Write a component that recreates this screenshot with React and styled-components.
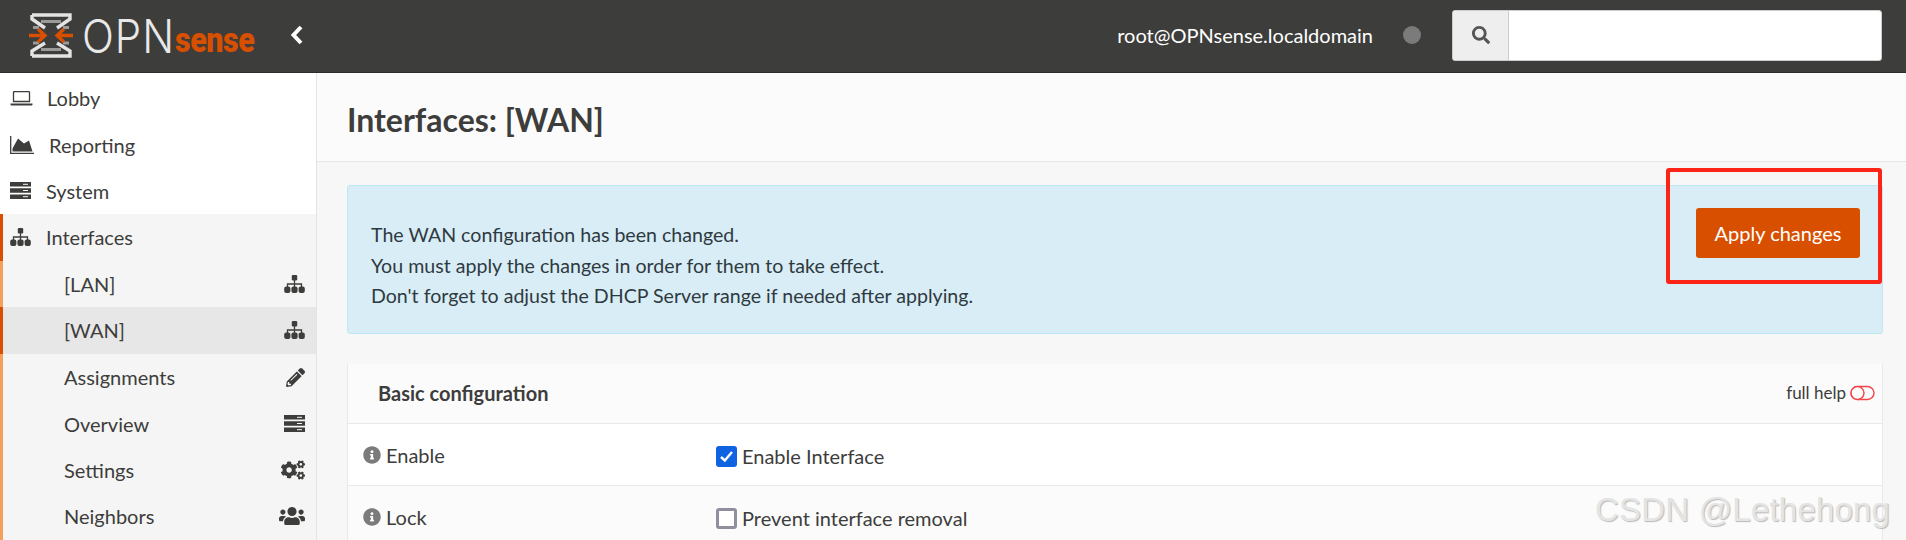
import React from 'react';
import styled, { createGlobalStyle } from 'styled-components';
import { FaPencilAlt, FaCogs, FaUsers, FaInfoCircle, FaSearch } from 'react-icons/fa';

const GlobalStyle = createGlobalStyle`
  html, body { margin: 0; padding: 0; height: 540px; overflow: hidden; background: #f7f7f7; }
  * { box-sizing: border-box; }
  body { font-family: "Lato", "Open Sans", sans-serif; color: #3d3d3b; }
`;

const LaptopIcon = () => (
  <svg width="23" height="15" viewBox="0 0 23 15">
    <path d="M3.5 1.5 a1 1 0 0 1 1-1 h14 a1 1 0 0 1 1 1 V10.5 H3.5 Z" fill="none" stroke="#3d3d3b" strokeWidth="1.3" />
    <path d="M0.5 12.5 H22.5 V13.5 a1 1 0 0 1-1 1 H1.5 a1 1 0 0 1-1-1 Z" fill="#3d3d3b" />
  </svg>
);

const AreaIcon = () => (
  <svg width="24" height="18" viewBox="0 0 24 18">
    <path d="M0.7 0 V17.3 H24" fill="none" stroke="#3d3d3b" strokeWidth="1.3" />
    <path d="M2.5 15.5 V12.5 L8 2.5 L14 7.5 L19 4.5 L22.5 15.5 Z" fill="#3d3d3b" />
  </svg>
);

const ServerIcon = () => (
  <svg width="21" height="17" viewBox="0 0 21 17">
    <path d="M0 0 H21 V4.6 H0 Z M0 6.2 H21 V10.8 H0 Z M0 12.4 H21 V17 H0 Z" fill="#3d3d3b" />
    <path d="M13 2.3 H18 M13 8.5 H18 M13 14.7 H18" stroke="#f5f5f5" strokeWidth="1" />
  </svg>
);

const SitemapIcon = () => (
  <svg width="21" height="18" viewBox="0 0 21 18">
    <rect x="7.8" y="0" width="5.4" height="5.4" rx="1.2" fill="#3d3d3b" />
    <path d="M10.5 5 V12 M3.5 12 V9 H17.5 V12" fill="none" stroke="#3d3d3b" strokeWidth="1.3" />
    <rect x="0.2" y="11.6" width="6.2" height="6.4" rx="2" fill="#3d3d3b" />
    <rect x="7.4" y="11.6" width="6.2" height="6.4" rx="2" fill="#3d3d3b" />
    <rect x="14.6" y="11.6" width="6.2" height="6.4" rx="2" fill="#3d3d3b" />
  </svg>
);

const LogoMark = () => (
  <svg width="44" height="45" viewBox="0 0 44 45">
    <path d="M3 2 H41 V6 L28 15 M3 2 V6 L16 15" fill="none" stroke="#e4e4e4" strokeWidth="3.4" />
    <path d="M3 43 H41 V38 L28 30 M3 43 V38 L16 30" fill="none" stroke="#e4e4e4" strokeWidth="3.4" />
    <path d="M12 8.5 H32 M12 36.5 H32" stroke="#9a9a9a" strokeWidth="3" />
    <path d="M4 14.5 H10 M34 14.5 H40 M4 30 H10 M34 30 H40" stroke="#9a9a9a" strokeWidth="3" />
    <path d="M0 22.5 H15 M9 16 L16 22.5 L9 29" fill="none" stroke="#d94f00" strokeWidth="3.4" />
    <path d="M44 22.5 H29 M35 16 L28 22.5 L35 29" fill="none" stroke="#d94f00" strokeWidth="3.4" />
  </svg>
);

const ToggleIcon = () => (
  <svg width="25" height="16" viewBox="0 0 25 16">
    <rect x="1" y="1.5" width="23" height="13" rx="6.5" fill="none" stroke="#f0454a" strokeWidth="1.4" />
    <circle cx="7.5" cy="8" r="6.5" fill="#fff" stroke="#f0454a" strokeWidth="1.4" />
  </svg>
);

const Page = styled.div`
  height: 540px;
  display: flex;
  flex-direction: column;
  position: relative;
  overflow: hidden;
`;

const TopBar = styled.header`
  height: 73px;
  flex: none;
  background: #3d3d3b;
  border-bottom: 1px solid #2c2c2a;
  display: flex;
  align-items: center;
  padding: 0 24px 2px 29px;
`;

const Logo = styled.div`
  display: flex;
  align-items: center;
  height: 45px;
`;

const LogoOpn = styled.span`
  font-family: "Inter", sans-serif;
  font-weight: 300;
  font-size: 42px;
  line-height: 45px;
  color: #e8e8e8;
  margin-left: 9px;
  letter-spacing: 1px;
  transform: scaleY(1.12);
`;

const LogoSense = styled.span`
  font-family: "Roboto", sans-serif;
  font-weight: 900;
  font-size: 35px;
  line-height: 30px;
  color: #d94f00;
  margin: 12px -8px 0 0;
  letter-spacing: -0.5px;
  transform: scaleX(0.87);
  transform-origin: left center;
`;

const Collapse = styled.svg`
  margin-left: 32px;
  flex: none;
`;

const TopRight = styled.div`
  margin-left: auto;
  display: flex;
  align-items: center;
`;

const UserName = styled.span`
  color: #fff;
  font-size: 20px;
`;

const Dot = styled.span`
  width: 18px;
  height: 18px;
  border-radius: 50%;
  background: #7b7b7b;
  margin: 0 31px 0 30px;
`;

const SearchBox = styled.div`
  width: 430px;
  height: 51px;
  display: flex;
  border-radius: 3px;
  overflow: hidden;
  background: #fff;
  border: 1px solid #ccc;
`;

const SearchAddon = styled.div`
  width: 56px;
  background: #eee;
  border-right: 1px solid #ccc;
  display: flex;
  align-items: center;
  justify-content: center;
  color: #555;
  font-size: 18px;
`;

const Body = styled.div`
  flex: 1;
  display: flex;
  min-height: 0;
`;

const Sidebar = styled.nav`
  width: 317px;
  flex: none;
  background: #fff;
  border-right: 1px solid #e4e4e4;
  padding-top: 2px;
`;

const NavRow = styled.div`
  height: ${p => p.$h || 46.4}px;
  display: flex;
  align-items: center;
  padding: 0 11px 0 ${p => (p.$sub ? 61 : 7)}px;
  font-size: 20px;
  color: #3d3d3b;
  background: ${p => (p.$active ? '#e7e7e7' : p.$open ? '#f5f5f5' : '#fff')};
  border-left: 3px solid ${p => (p.$bar === 'dark' ? '#d94f00' : p.$bar === 'light' ? '#f4a05a' : 'transparent')};
`;

const NavIcon = styled.span`
  width: ${p => p.$w}px;
  flex: none;
  display: flex;
  align-items: center;
`;

const SubIcon = styled.span`
  margin-left: auto;
  display: flex;
  align-items: center;
  font-size: ${p => p.$size || 21}px;
`;

const Main = styled.main`
  flex: 1;
  min-width: 0;
  background: #f7f7f7;
`;

const TitleBar = styled.div`
  height: 89px;
  background: #fbfbfb;
  border-bottom: 1px solid #e6e6e6;
  display: flex;
  align-items: center;
  padding: 4px 0 0 30px;
`;

const Title = styled.h1`
  margin: 0;
  font-size: 32px;
  font-weight: 700;
  color: #3d3d3b;
`;

const Content = styled.div`
  padding: 23px 23px 0 30px;
`;

const Alert = styled.div`
  height: 149px;
  background: #d9edf7;
  border: 1px solid #bce8f1;
  border-radius: 3px;
  display: flex;
  justify-content: space-between;
  padding: 22px 22px 0 23px;
`;

const AlertText = styled.div`
  font-size: 19.6px;
  line-height: 30.7px;
  padding-top: 12px;
  color: #2f3a40;
`;

const ApplyButton = styled.button`
  width: 164px;
  height: 50px;
  background: #d94f00;
  color: #fff;
  border: none;
  border-radius: 3px;
  font: inherit;
  font-size: 20px;
`;

const Panel = styled.section`
  margin-top: 30px;
  border-left: 1px solid #e9e9e9;
  border-right: 1px solid #e9e9e9;
`;

const PanelHead = styled.div`
  height: 60px;
  display: flex;
  align-items: center;
  justify-content: space-between;
  background: #fbfbfb;
  border-bottom: 1px solid #e9e9e9;
  padding: 0 7px 2px 30px;
`;

const PanelTitle = styled.strong`
  font-size: 20px;
  font-weight: 700;
`;

const HelpToggle = styled.span`
  display: flex;
  align-items: center;
  gap: 4px;
  font-size: 17px;
`;

const FormRow = styled.div`
  height: 62px;
  display: grid;
  grid-template-columns: 352px 1fr;
  align-items: center;
  padding-left: 15px;
  background: ${p => (p.$alt ? '#fbfbfb' : '#fff')};
  border-bottom: 1px solid #e9e9e9;
  font-size: 20px;
`;

const FieldLabel = styled.div`
  display: flex;
  align-items: center;
  gap: 5px;
  color: #3d3d3b;
  svg { color: #7b7b7b; font-size: 18px; }
`;

const CheckLabel = styled.label`
  display: flex;
  align-items: center;
  gap: 5px;
  margin: 3px 0 0 1px;
`;

const Check = styled.span`
  width: 21px;
  height: 21px;
  border-radius: 3px;
  display: flex;
  align-items: center;
  justify-content: center;
  background: ${p => (p.$on ? '#0f62e0' : '#fff')};
  border: ${p => (p.$on ? 'none' : '3px solid #8f8f9d')};
`;

const RedBox = styled.div`
  position: absolute;
  left: 1666px;
  top: 168px;
  width: 216px;
  height: 116px;
  border: 4px solid #fb2416;
  border-radius: 3px;
  pointer-events: none;
`;

const Watermark = styled.div`
  position: absolute;
  left: 1595px;
  top: 490px;
  font-family: "Liberation Sans", sans-serif;
  font-size: 33px;
  line-height: 40px;
  letter-spacing: 0.2px;
  color: #e4e4e4;
  text-shadow: 1px 1px 1px #b9b9b9;
  white-space: nowrap;
`;

export default function App() {
  return (
    <Page>
      <GlobalStyle />
      <TopBar>
        <Logo>
          <LogoMark />
          <LogoOpn>OPN</LogoOpn>
          <LogoSense>sense</LogoSense>
        </Logo>
        <Collapse width="14" height="20" viewBox="0 0 14 20">
          <path d="M11 2 L3.5 10 L11 18" fill="none" stroke="#fff" strokeWidth="4" />
        </Collapse>
        <TopRight>
          <UserName>root@OPNsense.localdomain</UserName>
          <Dot />
          <SearchBox>
            <SearchAddon><FaSearch /></SearchAddon>
          </SearchBox>
        </TopRight>
      </TopBar>
      <Body>
        <Sidebar>
          <NavRow><NavIcon $w={37}><LaptopIcon /></NavIcon>Lobby</NavRow>
          <NavRow><NavIcon $w={39}><AreaIcon /></NavIcon>Reporting</NavRow>
          <NavRow><NavIcon $w={36}><ServerIcon /></NavIcon>System</NavRow>
          <NavRow $open $bar="dark"><NavIcon $w={36}><SitemapIcon /></NavIcon>Interfaces</NavRow>
          <NavRow $open $sub $bar="light">[LAN]<SubIcon><SitemapIcon /></SubIcon></NavRow>
          <NavRow $active $sub $bar="dark" $h={47}>[WAN]<SubIcon><SitemapIcon /></SubIcon></NavRow>
          <NavRow $open $sub $bar="light">Assignments<SubIcon $size={19}><FaPencilAlt /></SubIcon></NavRow>
          <NavRow $open $sub $bar="light">Overview<SubIcon><ServerIcon /></SubIcon></NavRow>
          <NavRow $open $sub $bar="light">Settings<SubIcon $size={24}><FaCogs /></SubIcon></NavRow>
          <NavRow $open $sub $bar="light">Neighbors<SubIcon $size={26}><FaUsers /></SubIcon></NavRow>
        </Sidebar>
        <Main>
          <TitleBar>
            <Title>Interfaces: [WAN]</Title>
          </TitleBar>
          <Content>
            <Alert>
              <AlertText>
                The WAN configuration has been changed.<br />
                You must apply the changes in order for them to take effect.<br />
                Don't forget to adjust the DHCP Server range if needed after applying.
              </AlertText>
              <ApplyButton>Apply changes</ApplyButton>
            </Alert>
            <Panel>
              <PanelHead>
                <PanelTitle>Basic configuration</PanelTitle>
                <HelpToggle>full help <ToggleIcon /></HelpToggle>
              </PanelHead>
              <FormRow>
                <FieldLabel><FaInfoCircle />Enable</FieldLabel>
                <CheckLabel>
                  <Check $on>
                    <svg width="15" height="13" viewBox="0 0 15 13">
                      <path d="M2 7 L5.8 10.5 L13 2" fill="none" stroke="#fff" strokeWidth="2.4" />
                    </svg>
                  </Check>
                  Enable Interface
                </CheckLabel>
              </FormRow>
              <FormRow $alt>
                <FieldLabel><FaInfoCircle />Lock</FieldLabel>
                <CheckLabel><Check />Prevent interface removal</CheckLabel>
              </FormRow>
            </Panel>
          </Content>
        </Main>
      </Body>
      <RedBox />
      <Watermark>CSDN @Lethehong</Watermark>
    </Page>
  );
}
